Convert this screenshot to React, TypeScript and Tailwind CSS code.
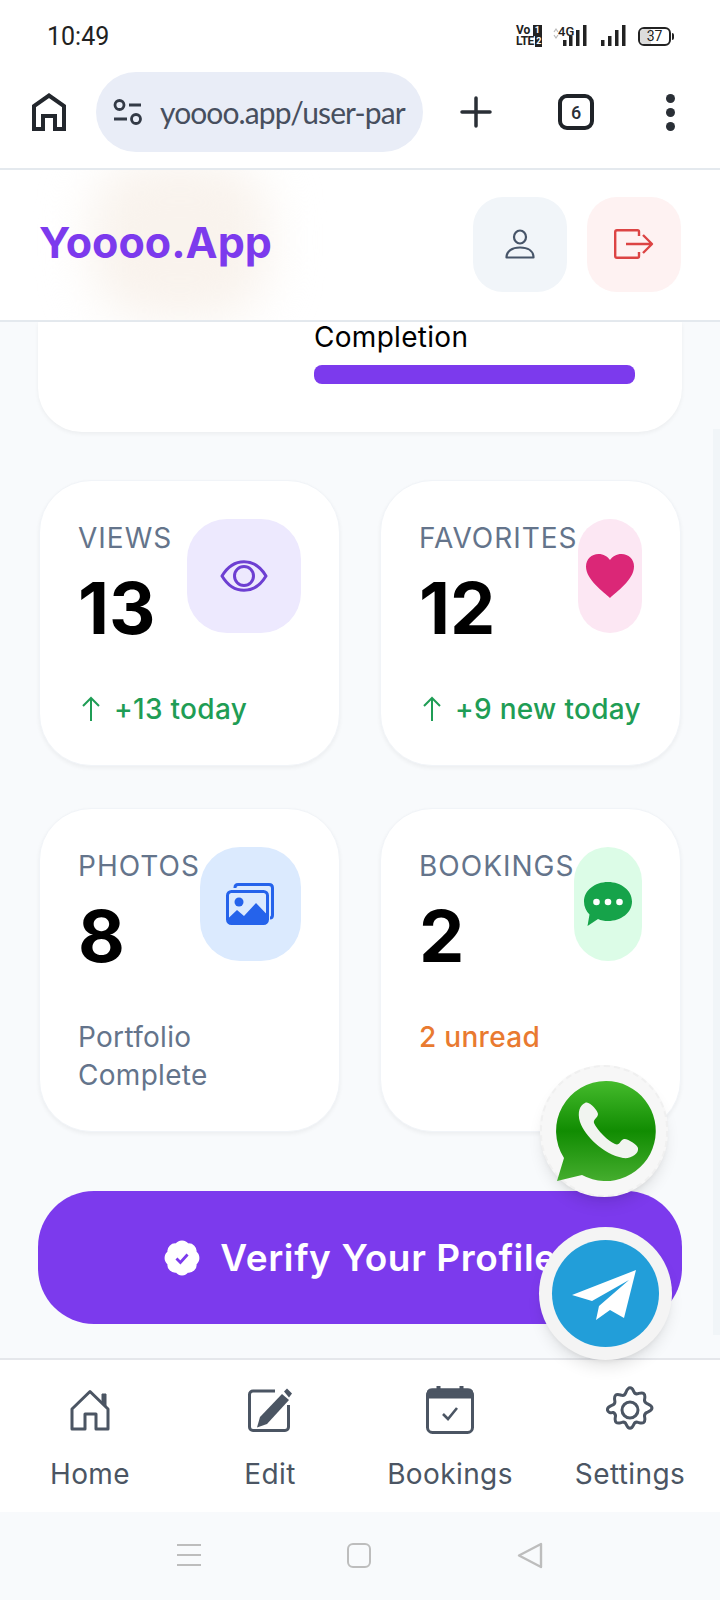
const inter = "font-['Inter',sans-serif]";

interface StatCard {
  label: string;
  value: string;
  icon: React.ReactNode;
  iconBg: string;
  footer: React.ReactNode;
}

function EyeIcon() {
  return (
    <svg width="48" height="32" viewBox="0 0 48 32" fill="none" stroke="#6d3fd2" strokeWidth="3">
      <path d="M2 16C8 6 15 1.700 24 1.700S40 6 46 16C40 26 33 30.300 24 30.300S8 26 2 16Z" strokeLinejoin="round" />
      <ellipse cx="24" cy="16" rx="9.500" ry="9.500" />
    </svg>
  );
}

function HeartIcon() {
  return (
    <svg width="48" height="44" viewBox="0 0 48 44" fill="#db2777">
      <path d="M24 44C18 38 0 26 0 12.500 0 5 5.500 0 12.500 0 17.500 0 21.500 2.500 24 6 26.500 2.500 30.500 0 35.500 0 42.500 0 48 5 48 12.500 48 26 30 38 24 44Z" />
    </svg>
  );
}

function PhotosIcon() {
  return (
    <svg width="48" height="42" viewBox="0 0 48 42" fill="none">
      <path d="M9 5V4.500C9 2.500 10.500 1.500 12 1.500H43C45.500 1.500 46.500 3 46.500 5V32C46.500 34 45.500 35 44 35" stroke="#2563eb" strokeWidth="3" />
      <rect x="1.500" y="8.500" width="40" height="32" rx="4" stroke="#2563eb" strokeWidth="3" />
      <circle cx="13" cy="19" r="4.500" fill="#2563eb" />
      <path d="M1.500 36 11 27 18 33 30 20 41.500 32V37C41.500 39.500 40 41 38 41H5C3 41 1.500 39.500 1.500 37Z" fill="#2563eb" />
    </svg>
  );
}

function ChatIcon() {
  return (
    <svg width="48" height="44" viewBox="0 0 48 44" fill="#16a34a">
      <path d="M24 0C37.300 0 48 8.500 48 19.500S37.300 39 24 39C20.500 39 17 38.500 14 37L3.500 44 5.500 32.500C2 29 0 24.500 0 19.500 0 8.500 10.700 0 24 0Z" />
      <circle cx="12.500" cy="20" r="3.300" fill="#fff" />
      <circle cx="24" cy="20" r="3.300" fill="#fff" />
      <circle cx="35.500" cy="20" r="3.300" fill="#fff" />
    </svg>
  );
}

function Trend({ text }: { text: string }) {
  return (
    <div className="flex items-center whitespace-nowrap text-[#1f9d55]">
      <svg width="20" height="26" viewBox="0 0 20 26" fill="none" stroke="currentColor" strokeWidth="2" className="ml-[3px] mr-[13px] shrink-0">
        <path d="M10 25V2M2 10l8-8 8 8" />
      </svg>
      <span className="font-medium">{text}</span>
    </div>
  );
}

const stats: StatCard[] = [
  { label: 'VIEWS', value: '13', icon: <EyeIcon />, iconBg: 'bg-[#ede9fe]', footer: <Trend text="+13 today" /> },
  { label: 'FAVORITES', value: '12', icon: <HeartIcon />, iconBg: 'bg-[#fce7f3]', footer: <Trend text="+9 new today" /> },
  { label: 'PHOTOS', value: '8', icon: <PhotosIcon />, iconBg: 'bg-[#dbeafe]', footer: <span className="text-[#64748b]">Portfolio<br />Complete</span> },
  { label: 'BOOKINGS', value: '2', icon: <ChatIcon />, iconBg: 'bg-[#dcfce7]', footer: <span className="font-medium text-[#e97a30]">2 unread</span> },
];

function StatusBar() {
  return (
    <div className="flex h-[72px] items-center justify-between bg-white pl-[47px] pr-[46px]">
      <span className="font-['Roboto',sans-serif] text-[25px] leading-none text-[#222]">10:49</span>
      <div className="flex items-center">
        <div className="flex w-[26px] flex-col font-['Roboto',sans-serif] text-[12px] font-bold leading-[11px] text-[#222]">
          <span className="flex justify-between">Vo<span className="bg-[#222] px-[2px] text-white text-[9px]">1</span></span>
          <span className="flex justify-between tracking-[-0.5px]">LTE<span className="bg-[#222] px-[1px] text-white text-[9px]">2</span></span>
        </div>
        <svg width="36" height="24" viewBox="0 0 36 24" className="ml-[10px]" fill="#222">
          <path d="M2 8l2-3 2 3M2 11l2 3 2-3" fill="none" stroke="#bbb" strokeWidth="1.200" />
          <rect x="11" y="16" width="3.500" height="6" />
          <rect x="17" y="12" width="3.500" height="10" />
          <rect x="24" y="6" width="3.500" height="16" />
          <rect x="31" y="1" width="3.500" height="21" />
        </svg>
        <span className="absolute left-[558px] top-[22px] font-['Roboto',sans-serif] text-[13px] font-medium text-[#222]">4G</span>
        <svg width="26" height="24" viewBox="0 0 26 24" className="ml-[12px]" fill="#222">
          <rect x="1" y="16" width="3.500" height="6" />
          <rect x="8" y="12" width="3.500" height="10" />
          <rect x="15" y="6" width="3.500" height="16" />
          <rect x="22" y="1" width="3.500" height="21" />
        </svg>
        <div className="relative ml-[12px] flex h-[19px] w-[33px] items-center justify-center overflow-hidden rounded-[6px] border-2 border-[#222] font-['Roboto',sans-serif] text-[14px] leading-none text-[#222]">
          <span className="absolute inset-y-0 left-0 w-[37%] bg-[#dcdcdc]" />
          <span className="relative">37</span>
        </div>
        <span className="ml-[1px] h-[7px] w-[2px] rounded-r bg-[#222]" />
      </div>
    </div>
  );
}

function BrowserBar() {
  return (
    <div className="flex h-[96px] items-center bg-white pb-[16px] pl-[32px]">
      <svg width="34" height="38" viewBox="0 0 34 38" fill="none" stroke="#23272d" strokeWidth="4">
        <path d="M2 36V13L17 2.500 32 13V36H23V23H11V36Z" />
      </svg>
      <div className="ml-[30px] flex h-[80px] w-[327px] items-center rounded-full bg-[#e9edf7] pl-[17px]">
        <svg width="30" height="28" viewBox="0 0 30 28" fill="none" stroke="#333a46" strokeWidth="2.800" className="shrink-0">
          <circle cx="6.500" cy="7" r="4.500" />
          <path d="M16 7h12M1 21h13" />
          <circle cx="23" cy="21" r="4.500" />
        </svg>
        <div className="ml-[17px] whitespace-nowrap font-['Lato',sans-serif] text-[30px] leading-none tracking-[-0.9px] text-[#474f5e]">yoooo.app/user-par</div>
      </div>
      <svg width="32" height="32" viewBox="0 0 32 32" stroke="#2a2f36" strokeWidth="3.500" strokeLinecap="round" className="ml-[37px]">
        <path d="M16 2v28M2 16h28" />
      </svg>
      <div className="ml-[66px] flex h-[36px] w-[36px] items-center justify-center rounded-[9px] border-[4px] border-[#1f2328] font-['Roboto',sans-serif] text-[18px] font-medium text-[#2a2f36]">6</div>
      <div className="ml-[72px] flex flex-col gap-[5px]">
        <span className="h-[9px] w-[9px] rounded-full bg-[#2a2f36]" />
        <span className="h-[9px] w-[9px] rounded-full bg-[#2a2f36]" />
        <span className="h-[9px] w-[9px] rounded-full bg-[#2a2f36]" />
      </div>
    </div>
  );
}

function Header() {
  return (
    <header className="relative flex h-[154px] shrink-0 items-center justify-between overflow-hidden border-y-2 border-[#e4e9ee] bg-white pl-[39px] pr-[39px]">
      <div className="absolute left-[90px] top-[-10px] h-[160px] w-[180px] rounded-[60px] bg-[#f9f3ed] blur-[24px]" />
      <h1 className={`relative mb-[6px] ${inter} text-[43px] font-bold leading-none text-[#7c3aed]`}>Yoooo.App</h1>
      <div className="relative mb-[2px] flex gap-[20px]">
        <button className="flex h-[95px] w-[94px] items-center justify-center rounded-[30px] bg-[#f1f5f9]">
          <svg width="30" height="30" viewBox="0 0 30 30" fill="none" stroke="#475569" strokeWidth="2.200">
            <ellipse cx="15" cy="8" rx="6" ry="6.500" />
            <path d="M1.500 28.500C1.500 22 7 18.500 15 18.500S28.500 22 28.500 28.500Z" strokeLinejoin="round" />
          </svg>
        </button>
        <button className="flex h-[95px] w-[94px] items-center justify-center rounded-[30px] bg-[#fef2f2]">
          <svg width="40" height="30" viewBox="0 0 40 30" fill="none" stroke="#dc4444" strokeWidth="2.400" strokeLinejoin="round">
            <path d="M25 7V2.500C25 1.700 24.300 1.200 23.500 1.200H3C2 1.200 1.200 1.900 1.200 3V27C1.200 28 2 28.800 3 28.800H23.500C24.300 28.800 25 28.200 25 27.300V23" />
            <path d="M12 15H38M29 6l9 9-9 9" />
          </svg>
        </button>
      </div>
    </header>
  );
}

function Stats() {
  return (
    <div className="mx-[1px] mt-[48px] grid grid-cols-2 gap-x-[40px] gap-y-[42px]">
      {stats.map((stat) => (
        <div key={stat.label} className="rounded-[52px] border border-[#f1f4f8] bg-white pb-[37px] pl-[38px] pr-[38px] pt-[38px] shadow-[0_2px_4px_rgba(0,0,0,0.05)]">
          <div className="flex justify-between">
            <div>
              <div className="text-[28px] leading-[38px] tracking-[1px] text-[#64748b]">{stat.label}</div>
              <div className="mt-[15px] text-[72px] font-bold leading-[72px] text-black">{stat.value}</div>
            </div>
            <div className={`flex h-[114px] w-[114px] min-w-0 items-center justify-center rounded-[40px] ${stat.iconBg}`}>{stat.icon}</div>
          </div>
          <div className="mt-[46px] text-[28px] leading-[38px] tracking-[0.3px]">{stat.footer}</div>
        </div>
      ))}
    </div>
  );
}

function BottomNav() {
  const items = [
    {
      label: 'Home',
      icon: (
        <svg width="40" height="42" viewBox="0 0 40 42" fill="none" stroke="#4b5563" strokeWidth="3" strokeLinejoin="round">
          <path d="M2 40V20L20 2.500 38 20V40H26V25H15V40Z" />
          <path d="M32 14V5H36V18" fill="#4b5563" strokeWidth="1" />
        </svg>
      ),
    },
    {
      label: 'Edit',
      icon: (
        <svg width="44" height="44" viewBox="0 0 44 44" fill="none">
          <path d="M27 3H5C3 3 1.500 4.500 1.500 6.500V39C1.500 41 3 42.500 5 42.500H37C39 42.500 40.500 41 40.500 39V17" stroke="#4b5563" strokeWidth="3" />
          <path d="M34 6 41 12 19 36 9 39.500 12 29Z" fill="#4b5563" />
          <path d="M36 3.500 39 0.500 44 5.500 41 9.500Z" fill="#4b5563" />
        </svg>
      ),
    },
    {
      label: 'Bookings',
      icon: (
        <svg width="48" height="48" viewBox="0 0 48 48" fill="none">
          <path d="M1.500 12V6C1.500 4 3 3 5 3H11V0H14V3H34V0H37V3H43C45 3 46.500 4 46.500 6V12Z" fill="#4b5563" stroke="#4b5563" />
          <rect x="1.500" y="4" width="45" height="42.500" rx="5" stroke="#4b5563" strokeWidth="3" />
          <path d="M17 28l5 5 9-11" stroke="#4b5563" strokeWidth="2.600" />
        </svg>
      ),
    },
    {
      label: 'Settings',
      icon: (
        <svg width="48" height="48" viewBox="0 0 24 24" fill="none" stroke="#4b5563" strokeWidth="1.500" strokeLinejoin="round">
          <path d="M12 .9c1.200 0 1.500 1 1.900 1.900.4.900 1.300 1.300 2.200 1 1-.3 2-.7 2.800 0 .8.800.6 1.800.4 2.800-.2 1 .3 1.800 1.200 2.200.9.400 2.500.900 2.500 2.200s-1.600 1.800-2.500 2.200c-.9.400-1.400 1.200-1.200 2.200.2 1 .4 2-.4 2.800-.8.700-1.800.3-2.800 0-.9-.3-1.800.1-2.200 1-.4.900-.7 1.900-1.900 1.900s-1.500-1-1.900-1.900c-.4-.9-1.300-1.300-2.200-1-1 .3-2 .7-2.800 0-.8-.8-.6-1.800-.4-2.800.2-1-.3-1.800-1.200-2.200C2.300 13.600.7 13.100.7 11.800s1.600-1.800 2.500-2.200c.9-.4 1.400-1.200 1.200-2.200-.2-1-.4-2 .4-2.800.8-.7 1.800-.3 2.800 0 .9.300 1.800-.1 2.200-1C10.500 1.900 10.800.9 12 .9Z" />
          <circle cx="12" cy="12" r="4" />
        </svg>
      ),
    },
  ];
  return (
    <nav className="grid h-[154px] shrink-0 grid-cols-4 border-t-2 border-[#e5e7eb] bg-white">
      {items.map((item) => (
        <div key={item.label} className="flex flex-col items-center">
          <div className="mt-[26px] flex h-[48px] items-center">{item.icon}</div>
          <span className="mt-[21px] text-[28px] leading-[38px] tracking-[0.4px] text-[#4b5563]">{item.label}</span>
        </div>
      ))}
    </nav>
  );
}

function SystemNav() {
  return (
    <div className="flex h-[88px] shrink-0 items-center justify-center gap-[146px] bg-[#f8fafc] pb-[2px]">
      <div className="flex w-[24px] flex-col gap-[8px]">
        <span className="h-[2px] bg-[#bdbdbd]" />
        <span className="h-[2px] bg-[#bdbdbd]" />
        <span className="h-[2px] bg-[#bdbdbd]" />
      </div>
      <div className="h-[25px] w-[24px] rounded-[6px] border-2 border-[#bdbdbd]" />
      <svg width="26" height="27" viewBox="0 0 26 27" fill="none" stroke="#bdbdbd" strokeWidth="2.400" strokeLinejoin="round">
        <path d="M24 2V25L2 13.500Z" />
      </svg>
    </div>
  );
}

function FloatingButtons() {
  return (
    <>
      <div className="absolute left-[540px] top-[1065px] flex h-[132px] w-[128px] items-center justify-center rounded-full border-2 border-dashed border-[#f0f0f0] bg-[#f7f7f7] shadow-lg">
        <svg width="106" height="106" viewBox="0 0 106 106" className="ml-[4px]">
          <defs>
            <linearGradient id="wa" x1="0" y1="0" x2="0" y2="1">
              <stop offset="0" stopColor="#45bb2c" />
              <stop offset="0.5" stopColor="#118c02" />
              <stop offset="1" stopColor="#45ad2e" />
            </linearGradient>
          </defs>
          <path d="M53 3A50 50 0 1 1 29 97L4 103 11 80A50 50 0 0 1 53 3Z" fill="url(#wa)" />
          <path d="M32 25C27 27 24 34 27 44 32 58 50 76 70 80 78 81 86 76 85 70 85 67 74 60 71 61 67 62 67 68 62 66 55 63 44 52 41 45 40 41 45 40 45 36 45 33 36 22 32 25Z" fill="#f1f4f0" />
        </svg>
      </div>
      <div className="absolute left-[539px] top-[1227px] flex h-[133px] w-[133px] items-center justify-center rounded-full bg-[#f4f4f4] shadow-lg">
        <div className="flex h-[107px] w-[107px] items-center justify-center rounded-full bg-[#229ed9]">
          <svg width="64" height="50" viewBox="0 0 64 50" className="ml-[-4px] mt-[2px]">
            <path d="M64 0 0 25 20 31 57 10 27 36 24 50 38 40 52 48Z" fill="#fff" />
          </svg>
        </div>
      </div>
    </>
  );
}

export default function App() {
  return (
    <div className={`relative flex h-[1600px] w-[720px] flex-col overflow-hidden bg-[#f8fafc] ${inter}`}>
      <StatusBar />
      <BrowserBar />
      <Header />
      <main className="relative min-h-0 flex-1 px-[38px]">
        <div className="h-[110px] rounded-b-[44px] bg-white pl-[276px] pr-[47px] shadow-[0_2px_4px_rgba(0,0,0,0.05)]">
          <div className="-translate-y-[2px] text-[28px] leading-[34px] tracking-[0.3px] text-black">Completion</div>
          <div className="mt-[9px] h-[19px] rounded-[8px] bg-[#7c3aed]" />
        </div>
        <Stats />
        <button className="mt-[59px] flex h-[133px] w-full items-center justify-center gap-[19px] rounded-[56px] bg-[#7c3aed] text-[37px] font-semibold tracking-[0.6px] text-white">
          <svg width="38" height="38" viewBox="0 0 24 24">
            <path d="M3.85 8.62a4 4 0 0 1 4.78-4.77 4 4 0 0 1 6.74 0 4 4 0 0 1 4.78 4.78 4 4 0 0 1 0 6.74 4 4 0 0 1-4.77 4.78 4 4 0 0 1-6.75 0 4 4 0 0 1-4.78-4.77 4 4 0 0 1 0-6.76Z" fill="#fff" stroke="#fff" strokeWidth="2" />
            <path d="M8.500 12.300l2.500 2.500 4.500-5" fill="none" stroke="#7c3aed" strokeWidth="1.800" />
          </svg>
          Verify Your Profile
        </button>
        <div className="absolute right-0 top-[107px] h-[906px] w-[7px] bg-[#f1f5f8]" />
      </main>
      <BottomNav />
      <SystemNav />
      <FloatingButtons />
    </div>
  );
}
